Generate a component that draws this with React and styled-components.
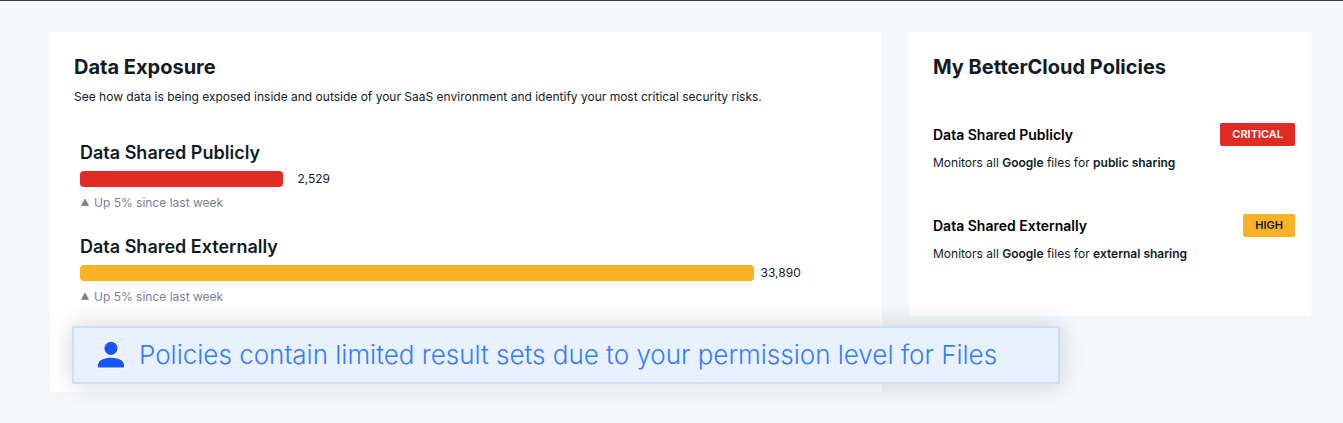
import React from 'react';
import styled, { createGlobalStyle } from 'styled-components';

const GlobalStyle = createGlobalStyle`
  * {
    box-sizing: border-box;
  }
  body {
    margin: 0;
    background: #f4f8fb;
    color: #111b24;
    font-family: Inter, 'Liberation Sans', sans-serif;
  }
`;

const Page = styled.main`
  border-top: 1px solid #3d3d45;
  padding: 31px 32px 31px 50px;
`;

const Dashboard = styled.div`
  position: relative;
  display: grid;
  grid-template-columns: minmax(0, 1fr) 402px;
  align-items: start;
  gap: 27px;
`;

const Card = styled.section`
  background: white;
  border-radius: 1px;
`;

const ExposureCard = styled(Card)`
  padding: 23px 24px 87px;
`;

const PoliciesCard = styled(Card)`
  padding: 23px 16px 53px 24px;
`;

const CardTitle = styled.h2`
  margin: 0;
  font-size: 20px;
  font-weight: 700;
  line-height: 24px;
`;

const Intro = styled.p`
  margin: 9px 0 0;
  font-size: 12px;
  line-height: 18px;
`;

const Chart = styled.div`
  display: flex;
  flex-direction: column;
  gap: 24px;
  margin-top: 35px;
  padding-left: 6px;
`;

const MetricName = styled.h3`
  margin: 0 0 6px;
  font-size: 18px;
  font-weight: 600;
  line-height: 24px;
`;

const BarRow = styled.div`
  display: flex;
  align-items: center;
`;

const Bar = styled.div`
  flex: none;
  height: 16px;
  border-radius: 4px;
  background: ${props => props.$color};
`;

const Value = styled.span`
  flex: none;
  min-width: 47px;
  font-size: 12px;
  line-height: 16px;
  text-align: right;
`;

const Trend = styled.div`
  display: flex;
  align-items: center;
  gap: 4px;
  margin-top: 8px;
  color: #7c8097;
  font-size: 12px;
  line-height: 16px;
`;

const PolicyList = styled.ul`
  display: flex;
  flex-direction: column;
  gap: 42px;
  margin: 44px 0 0;
  padding: 0;
  list-style: none;
`;

const PolicyHeader = styled.div`
  display: flex;
  align-items: center;
  justify-content: space-between;
`;

const PolicyName = styled.h3`
  margin: 0;
  color: black;
  font-size: 14px;
  font-weight: 600;
  line-height: 20px;
`;

const Badge = styled.span`
  padding: 0 12px;
  border-radius: 2px;
  background: ${props => props.$color};
  color: ${props => props.$text};
  font-size: 11px;
  font-weight: 600;
  line-height: 23px;
`;

const PolicyText = styled.p`
  margin: 8px 0 0;
  font-size: 12px;
  line-height: 18px;

  strong {
    font-weight: 600;
  }
`;

const Notice = styled.div`
  position: absolute;
  left: 22px;
  right: 251px;
  bottom: 8px;
  display: flex;
  align-items: center;
  gap: 14px;
  height: 58px;
  padding: 0 24px;
  border: 2px solid #cbdcff;
  border-radius: 2px;
  background: #eaf1fe;
  box-shadow: 0 0 24px rgba(60, 65, 55, 0.22);
  color: #327dff;
  font-size: 26px;
  font-weight: 300;
  line-height: 32px;
  white-space: nowrap;
`;

const red = '#e02b25';
const amber = '#f9b225';

const metrics = [
  { name: 'Data Shared Publicly', value: '2,529', width: 26.1, color: red },
  { name: 'Data Shared Externally', value: '33,890', width: 86.6, color: amber },
];

const policies = [
  { name: 'Data Shared Publicly', sharing: 'public sharing', level: 'CRITICAL', color: red, text: 'white' },
  { name: 'Data Shared Externally', sharing: 'external sharing', level: 'HIGH', color: amber, text: '#111b24' },
];

const UpArrow = () => (
  <svg width="10" height="10" viewBox="0 0 10 10" aria-hidden="true">
    <path d="M5 1 L8.5 7.5 H1.5 Z" fill="#7c8097" stroke="#7c8097" strokeWidth="0.8" strokeLinejoin="round" />
  </svg>
);

const PersonIcon = () => (
  <svg width="27" height="30" viewBox="0 0 27 30" overflow="visible" aria-hidden="true">
    <g fill="#1557f5" stroke="white" strokeWidth="2" paintOrder="stroke">
      <circle cx="13" cy="8.3" r="6.6" />
      <path d="M0 27.6 V25 C0 20 6.5 17.8 13 17.8 S26 20 26 25 V27.6 Z" />
    </g>
  </svg>
);

const App = () => (
  <>
    <GlobalStyle />
    <Page>
      <Dashboard>
        <ExposureCard>
          <CardTitle>Data Exposure</CardTitle>
          <Intro>
            See how data is being exposed inside and outside of your SaaS environment and identify your most critical security risks.
          </Intro>
          <Chart>
            {metrics.map(metric => (
              <div key={metric.name}>
                <MetricName>{metric.name}</MetricName>
                <BarRow>
                  <Bar $color={metric.color} style={{ width: `${metric.width}%` }} />
                  <Value>{metric.value}</Value>
                </BarRow>
                <Trend><UpArrow />Up 5% since last week</Trend>
              </div>
            ))}
          </Chart>
        </ExposureCard>
        <PoliciesCard>
          <CardTitle>My BetterCloud Policies</CardTitle>
          <PolicyList>
            {policies.map(policy => (
              <li key={policy.name}>
                <PolicyHeader>
                  <PolicyName>{policy.name}</PolicyName>
                  <Badge $color={policy.color} $text={policy.text}>{policy.level}</Badge>
                </PolicyHeader>
                <PolicyText>
                  Monitors all <strong>Google</strong> files for <strong>{policy.sharing}</strong>
                </PolicyText>
              </li>
            ))}
          </PolicyList>
        </PoliciesCard>
        <Notice role="status">
          <PersonIcon />
          Policies contain limited result sets due to your permission level for Files
        </Notice>
      </Dashboard>
    </Page>
  </>
);

export default App;
